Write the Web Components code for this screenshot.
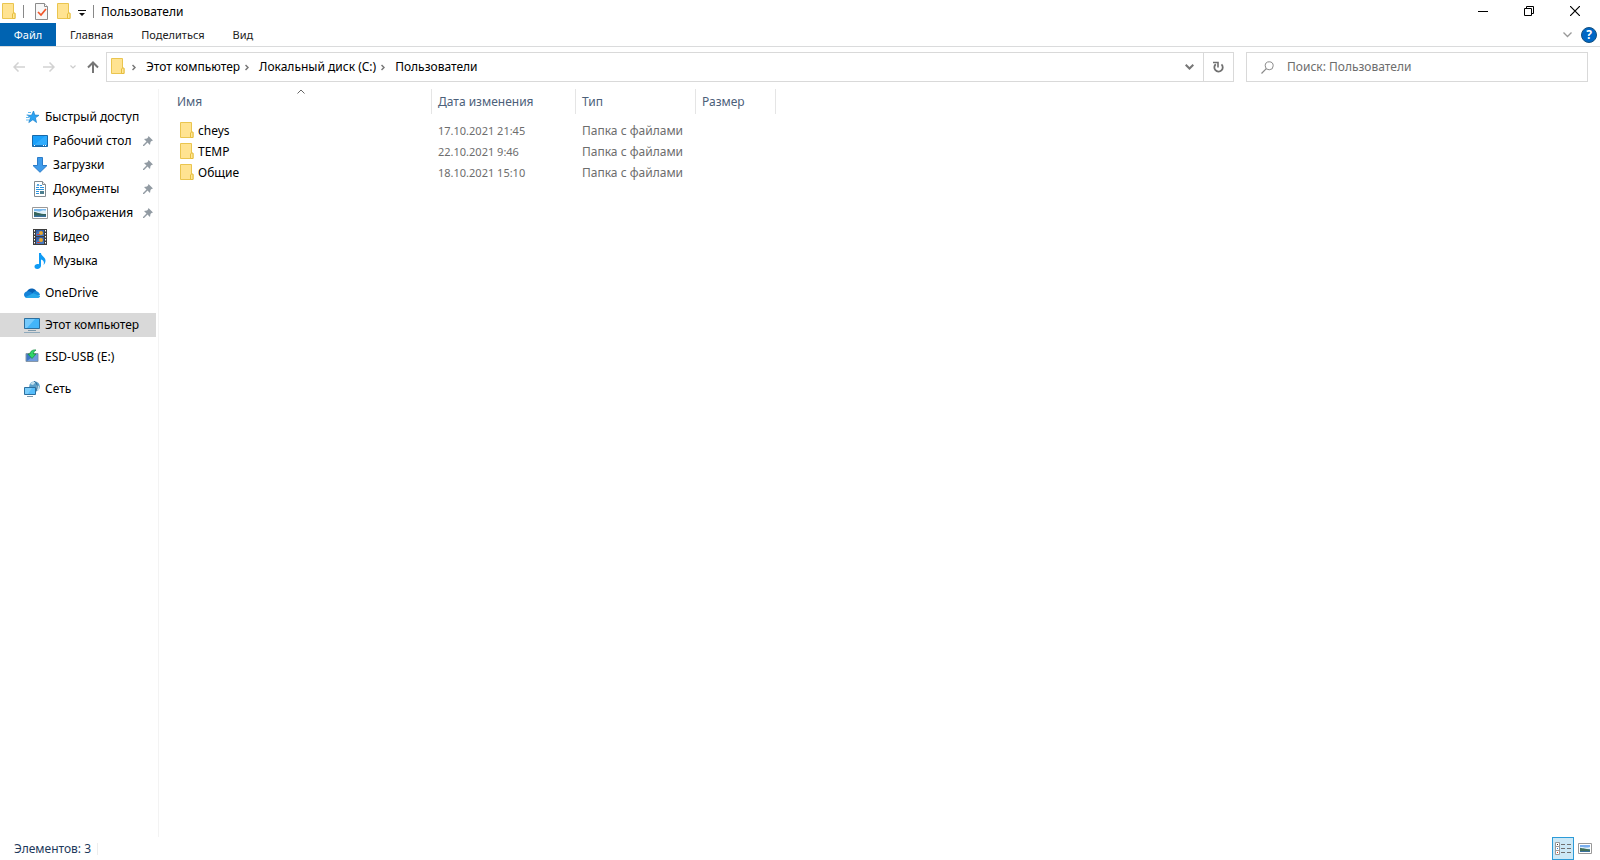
<!DOCTYPE html>
<html lang="ru">
<head>
<meta charset="utf-8">
<title>Пользователи</title>
<style>
  html, body { height: 100%; margin: 0; }
  body { background: #fff; color: #000; font: 12px/16px "Noto Sans", "Open Sans", sans-serif; }
</style>
</head>
<body>
<explorer-window></explorer-window>

<script>
const RESET = `
  * { box-sizing: border-box; }
  button { font: inherit; color: inherit; background: none; border: 0; padding: 0; margin: 0;
           display: inline-flex; align-items: center; justify-content: center; white-space: nowrap; }
  a { color: inherit; text-decoration: none; white-space: nowrap; }
`;

function define(name, html, setup) {
  const template = document.createElement('template');
  template.innerHTML = html;
  customElements.define(name, class extends HTMLElement {
    constructor() {
      super();
      this.attachShadow({ mode: 'open' }).append(template.content.cloneNode(true));
    }
    connectedCallback() { if (setup) setup(this, this.shadowRoot); }
  });
}

/* name: [width, height, drawing] */
const ICONS = {
  folder: [14, 18, `<path d="M.5.5h11v10h1.500v5H.5z" fill="#ffe391" stroke="#eac54f"/><path d="M10.500 15.500v-4.500l1-1h1.500v5.500z" fill="#ffe896" stroke="#e6bd3f"/>`],
  check: [13, 17, `<path d="M.5.5h9l3 3v13h-12z" fill="#f7f7f7" stroke="#8b8b8b"/><path d="M9.500.5v3h3" fill="#fff" stroke="#8b8b8b"/><path d="M3 9l3 3 5-6" fill="none" stroke="#f0562a" stroke-width="1.700"/>`],
  menu: [8, 6, `<path d="M0 0h8v1H0zM1 3h6L4 6z" fill="#111"/>`],
  min: [10, 10, `<path d="M0 5h10v1H0z"/>`],
  restore: [10, 10, `<path d="M.5 2.500h7v7h-7zM2.500 2.500v-2h7v7h-2" fill="none" stroke="#000"/>`],
  close: [10, 10, `<path d="M0 0l10 10M10 0L0 10" fill="none" stroke="#000" stroke-width="1.200"/>`],
  collapse: [9, 6, `<path d="M.5.5l4 4 4-4" fill="none" stroke="#999" stroke-width="1.300"/>`],
  back: [12, 10, `<path d="M12 5H1M5.500.5L1 5l4.500 4.500" fill="none" stroke="#d2d2d2" stroke-width="1.500"/>`],
  forward: [12, 10, `<path d="M0 5h11M6.500.5L11 5 6.500 9.500" fill="none" stroke="#d2d2d2" stroke-width="1.500"/>`],
  recent: [6, 4, `<path d="M.5.5L3 3 5.500.5" fill="none" stroke="#ccc" stroke-width="1.200"/>`],
  up: [12, 12, `<path d="M6 12V1M1 6.500L6 1.500l5 5" fill="none" stroke="#767676" stroke-width="2"/>`],
  crumb: [4, 7, `<path d="M.5 1l2.500 2.500L.5 6" fill="none" stroke="#777" stroke-width="1.500"/>`],
  down: [9, 6, `<path d="M.7.7l3.800 3.800L8.300.7" fill="none" stroke="#777" stroke-width="2"/>`],
  refresh: [11, 12, `<path d="M2.800 3.200A4.200 4.200 0 1 0 8.500 3.400" fill="none" stroke="#707070" stroke-width="1.800"/><path d="M0 1.500h5v5" fill="none" stroke="#707070" stroke-width="1.600"/>`],
  search: [13, 13, `<circle cx="8.200" cy="4.800" r="4" fill="none" stroke="#8a8a8a"/><path d="M5.300 7.700L.5 12.500" stroke="#8a8a8a" stroke-width="1.200"/>`],
  sort: [8, 5, `<path d="M.5 4.500L4 1l3.500 3.500" fill="none" stroke="#666"/>`],
  star: [16, 16, `<path d="M9.500 2l1.300 4.100 4.200.2-3.600 2.500 1.100 4.700-3.600-2.800-4.100 2.800 1.700-4.700L3.500 6.300h4.100z" fill="#2ba3f3" stroke="#2187cf" stroke-width=".8"/><path d="M4 3.500h3M2.500 6h2M2 8.500h3M2 11h3" stroke="#62b9ef"/>`],
  desktop: [16, 12, `<path d="M.5.5h15v11H.5z" fill="#1aa0fa" stroke="#1769aa"/><path d="M1 11L13 1h2v10z" fill="#40b4ff" opacity=".6"/><path d="M1 10h14v1H1z" fill="#1a75bd"/><path d="M2 10h1v1H2zM11 10h1v1h-1zM13 10h1v1h-1z" fill="#fff"/>`],
  download: [16, 16, `<path d="M5.500.5h5v8h4.500L8 15.300 1 8.500h4.500z" fill="#3f9bea" stroke="#2b7cc9"/>`],
  document: [12, 16, `<path d="M.5.5h8l3 3v12H.5z" fill="#fff" stroke="#828b90"/><path d="M8.500.5v3h3" fill="#eee" stroke="#828b90"/><path d="M2 6.500h3M6 4.500h2M6 6.500h4M2 8.500h8M2 10.500h3M2 12.500h3" stroke="#2c93dd"/><path d="M3 5l1-2 1 2" fill="none" stroke="#2c93dd"/><path d="M6 10h4v3H6z" fill="#4c7f8f"/>`],
  picture: [16, 12, `<path d="M.5.5h15v11H.5z" fill="#fff" stroke="#999"/><path d="M2 2h12v8H2z" fill="#7ab9ee"/><path d="M2 4.500c3-1.500 4 1 7-.5s3 0 5-.5V7H2z" fill="#e1f1fa"/><path d="M2 5c3 0 5 2 12 2v3H2z" fill="#36655b"/><path d="M2 8.500h12V10H2z" fill="#39709d"/>`],
  thumb: [14, 11, `<path d="M.5.5h13v10H.5z" fill="#fff" stroke="#999"/><path d="M2 2h10v7H2z" fill="#7aaeee"/><path d="M2 4.500c3-1.500 4 1 10-.5V6H2z" fill="#e1f1fa"/><path d="M2 5c3 0 5 1 10 1.500V9H2z" fill="#43705b"/><path d="M2 8h10v1H2z" fill="#39709d"/>`],
  video: [14, 16, `<path d="M0 0h14v16H0z" fill="#3d3d3d"/><path d="M3 1h8v6H3zM3 8h8v7H3z" fill="#315ea8"/><path d="M3 4l3-2 2 1 3 3v1H3zM3 12l4-3 4 4v2H3z" fill="#4677bd"/><circle cx="8" cy="4" r="2" fill="#e9a72c"/><circle cx="8" cy="11" r="2" fill="#e9a72c"/><path d="M4 5h3v1H4zM4 13h3v1H4z" fill="#d84234"/><path d="M1.500 1v15M12.500 1v15" stroke="#fff" stroke-dasharray="1.500 1.500"/>`],
  music: [12, 16, `<path d="M5 0h2c0 3 4.500 4 4.500 7.500 0 2-1 3.500-2 4.500 1-3 .2-4.500-2.500-5.500v6.200C7 14.500 5.300 16 3.300 16S.5 15 .5 13.600C.5 12 2 11 3.600 11c.5 0 1 .1 1.400.3z" fill="#0f9bf5"/>`],
  cloud: [16, 10, `<path d="M2.500 4.500C3.500 1.500 6 0 8.500.5c2.300.3 3.700 1.800 4.200 3.500L8 7z" fill="#0762b5"/><path d="M9 4.500c1-1 2.500-1.500 4-.9 1.700.6 3 2 3 3.600L9 8z" fill="#168cdb"/><path d="M3.200 3.300C5 3 6.500 3.700 8 4.700l8 3.600C15.600 9.400 14.600 10 13.300 10H3.500C1.500 10 0 8.500 0 6.700 0 5 1.400 3.500 3.200 3.300z" fill="#1583d8"/><path d="M1.200 9.200L9.300 5.200 16 8c-.4 1.300-1.400 2-2.700 2H3.500c-1 0-1.700-.3-2.300-.8z" fill="#28a8ea"/>`],
  computer: [16, 15, `<path d="M.5.5h15v10H.5z" fill="#42b5fa" stroke="#2d6f9e"/><path d="M1 1h10L3 10H1z" fill="#8bd3fc" opacity=".7"/><path d="M4 12.500h8" stroke="#7c98ab"/><path d="M0 14.500h16" stroke="#8fa9bb"/>`],
  usb: [16, 16, `<path d="M2 4.500h12v8H2z" fill="#3f78c6" stroke="#8798a9"/><path d="M3 12l9-7h1.500v7H3z" fill="#6e9bdb"/><path d="M12 1C9 .5 6 2 6 5H4l4 4.500L12 5H9.500C9.500 3 10.500 2 12 1z" fill="#2fd665" stroke="#158a40" stroke-width=".7"/>`],
  network: [16, 16, `<circle cx="10.500" cy="5.500" r="5.300" fill="#5a9fc9"/><path d="M6 3c2-2 4-3 6-2L9 4zM12 4l3 1v4l-2 1z" fill="#c2dfec"/><path d="M10 0c4 2 4 8 1 11" fill="none" stroke="#2b6793"/><path d="M.5 6.500h11v7H.5z" fill="#55bdfb" stroke="#2d6f9e"/><path d="M1 7h7l-4 6H1z" fill="#92d7fc" opacity=".6"/><path d="M3 15.500h6" stroke="#7c98ab"/>`],
  pin: [10, 10, `<path d="M5.500 0L10 4.500 8.500 5 7.500 6 7 9 4.500 6.500 1 10H0V9l3.500-3.500L1 3l3-.5 1-1z" fill="#929ba3"/>`],
  details: [16, 13, `<path d="M.5.500h4v4h-4zM.5 4.500h4v4h-4zM.5 8.500h4v4h-4z" fill="#fff" stroke="#999"/><path d="M2 2h1v1H2z" fill="#333"/><path d="M2 6h1v1H2z" fill="#2878d0"/><path d="M2 10h1v1H2z" fill="#e23b10"/><path d="M6 2.500h4M12 2.500h4M6 6.500h4M12 6.500h4M6 10.500h4M12 10.500h4" stroke="#707070"/>`],
};

define('ui-icon', `<style>:host{display:inline-flex;flex:none}svg{display:block}</style>`, (el, root) => {
  const [w, h, body] = ICONS[el.getAttribute('name')];
  root.innerHTML += `<svg width="${w}" height="${h}" viewBox="0 0 ${w} ${h}" aria-hidden="true">${body}</svg>`;
});

define('title-bar', `<style>${RESET}
  :host { display: flex; align-items: center; height: 23px; padding: 0 2px; }
  .sep { width: 1px; height: 13px; background: #888; }
  .quick { display: flex; align-items: center; flex: 1; }
  .sep.first { margin: 0 11px 0 7px; }
  .quick button + button { margin-left: 9px; }
  .quick button.more { margin: 2px 7px 0 7px; }
  h1 { font: inherit; margin: 0 0 0 7px; }
  .win { width: 46px; height: 21px; align-self: flex-start; }
</style>
<div class="quick">
  <ui-icon name="folder"></ui-icon><span class="sep first"></span>
  <button aria-label="Свойства"><ui-icon name="check"></ui-icon></button>
  <button aria-label="Новая папка"><ui-icon name="folder"></ui-icon></button>
  <button class="more" aria-label="Настройка панели"><ui-icon name="menu"></ui-icon></button>
  <span class="sep"></span><h1><slot></slot></h1>
</div>
<button class="win" aria-label="Свернуть"><ui-icon name="min"></ui-icon></button>
<button class="win" aria-label="Восстановить"><ui-icon name="restore"></ui-icon></button>
<button class="win" aria-label="Закрыть"><ui-icon name="close"></ui-icon></button>`);

define('ribbon-tabs', `<style>${RESET}
  :host { display: flex; align-items: center; height: 24px; border-bottom: 1px solid #dadbdc; padding-right: 3px; color: #222; font-size: 11px; }
  nav { display: flex; flex: 1; align-self: stretch; }
  nav button { padding: 0 14px; }
  nav .file { width: 56px; background: #0063b1; color: #fff; }
  .help { width: 16px; height: 16px; margin-left: 9px; border-radius: 50%; background: #0067c5; border: 1px solid #14507f; color: #fff; font-weight: 700; font-size: 12px; }
</style>
<nav>
  <button class="file">Файл</button><button>Главная</button><button>Поделиться</button><button>Вид</button>
</nav>
<button aria-label="Развернуть ленту"><ui-icon name="collapse"></ui-icon></button>
<button class="help" aria-label="Справка">?</button>`);

define('address-bar', `<style>${RESET}
  :host { display: flex; align-items: center; padding: 5px 12px 7px 13px; }
  .nav { display: flex; align-items: center; width: 93px; }
  .nav button:nth-child(2) { margin-left: 18px; }
  .nav button:nth-child(3) { margin-left: 15px; }
  .nav button:nth-child(4) { margin-left: 11px; }
  .path { display: flex; align-items: center; flex: 1; height: 30px; border: 1px solid #d9d9d9; padding-left: 4px; }
  .crumbs { display: flex; align-items: center; flex: 1; }
  .crumbs ui-icon + ui-icon { margin-left: 7px; }
  .crumbs a { margin: 0 5px 0 10px; }
  .path .drop { width: 28px; }
  .path .reload { width: 30px; height: 28px; border-left: 1px solid #d9d9d9; }
  label { display: flex; align-items: center; gap: 13px; width: 342px; height: 30px; margin-left: 12px; padding: 0 14px; border: 1px solid #d9d9d9; }
  input { flex: 1; min-width: 0; border: 0; padding: 0; outline: 0; font: inherit; background: none; }
  input::placeholder { color: #6d6d6d; opacity: 1; }
</style>
<div class="nav">
  <button aria-label="Назад"><ui-icon name="back"></ui-icon></button>
  <button aria-label="Вперед"><ui-icon name="forward"></ui-icon></button>
  <button aria-label="Последние расположения"><ui-icon name="recent"></ui-icon></button>
  <button aria-label="Вверх"><ui-icon name="up"></ui-icon></button>
</div>
<div class="path">
  <div class="crumbs">
    <ui-icon name="folder"></ui-icon>
    <ui-icon name="crumb"></ui-icon><a href="#computer">Этот компьютер</a>
    <ui-icon name="crumb"></ui-icon><a href="#c">Локальный диск (C:)</a>
    <ui-icon name="crumb"></ui-icon><a href="#users">Пользователи</a>
  </div>
  <button class="drop" aria-label="Предыдущие расположения"><ui-icon name="down"></ui-icon></button>
  <button class="reload" aria-label="Обновить"><ui-icon name="refresh"></ui-icon></button>
</div>
<label><ui-icon name="search"></ui-icon><input type="text" aria-label="Поиск" placeholder="Поиск: Пользователи"></label>`);

define('nav-item', `<style>${RESET}
  :host { display: block; }
  a { display: flex; align-items: center; height: 24px; padding: 0 3px 0 24px; }
  :host([nested]) a { padding-left: 32px; }
  :host([selected]) a { background: #d9d9d9; }
  .icon { display: flex; justify-content: center; width: 16px; margin-right: 5px; }
  .text { flex: 1; }
  .pin { display: none; }
  :host([pinned]) .pin { display: inline-flex; }
</style>
<a href="#"><span class="icon"></span><span class="text"><slot></slot></span><ui-icon class="pin" name="pin"></ui-icon></a>`,
(el, root) => { root.querySelector('.icon').innerHTML = `<ui-icon name="${el.getAttribute('icon')}"></ui-icon>`; });

define('nav-pane', `<style>${RESET}
  :host { display: flex; flex-direction: column; gap: 8px; width: 159px; padding: 16px 2px 0 0; border-right: 1px solid #f3f3f3; }
</style>
<div>
  <nav-item icon="star">Быстрый доступ</nav-item>
  <nav-item nested pinned icon="desktop">Рабочий стол</nav-item>
  <nav-item nested pinned icon="download">Загрузки</nav-item>
  <nav-item nested pinned icon="document">Документы</nav-item>
  <nav-item nested pinned icon="picture">Изображения</nav-item>
  <nav-item nested icon="video">Видео</nav-item>
  <nav-item nested icon="music">Музыка</nav-item>
</div>
<nav-item icon="cloud">OneDrive</nav-item>
<nav-item icon="computer" selected>Этот компьютер</nav-item>
<nav-item icon="usb">ESD-USB (E:)</nav-item>
<nav-item icon="network">Сеть</nav-item>`);

define('file-list', `<style>${RESET}
  :host { display: block; flex: 1; }
  table { table-layout: fixed; border-collapse: separate; border-spacing: 0; width: 617px; color: #6d6d6d; }
  th { padding: 0 0 6px; font-weight: 400; text-align: left; color: #4c607a; }
  th div { position: relative; height: 25px; padding: 5px 6px 0; border-right: 1px solid #e5e5e5; }
  th:first-child div { padding-left: 18px; }
  th ui-icon { position: absolute; top: 0; right: 126px; }
  td { height: 21px; padding: 0 6px; }
  td:first-child { padding-left: 21px; color: #000; }
  td.date { font-size: 11px; }
  .name { display: flex; align-items: center; gap: 4px; }
</style>
<table>
  <colgroup><col style="width:273px"><col style="width:144px"><col style="width:120px"><col style="width:80px"></colgroup>
  <thead><tr>
    <th><div>Имя<ui-icon name="sort"></ui-icon></div></th><th><div>Дата изменения</div></th><th><div>Тип</div></th><th><div>Размер</div></th>
  </tr></thead>
  <tbody></tbody>
</table>`, (el, root) => {
  const files = [['cheys', '17.10.2021 21:45'], ['TEMP', '22.10.2021 9:46'], ['Общие', '18.10.2021 15:10']];
  root.querySelector('tbody').innerHTML = files.map(([name, date]) =>
    `<tr><td><div class="name"><ui-icon name="folder"></ui-icon><span>${name}</span></div></td><td class="date">${date}</td><td>Папка с файлами</td><td></td></tr>`).join('');
});

define('status-bar', `<style>${RESET}
  :host { display: flex; align-items: center; height: 23px; padding: 0 4px 0 14px; color: #1e395b; }
  .count { flex: 1; }
  .count span { display: inline-block; padding-right: 6px; line-height: 12px; border-right: 1px solid #eee; }
  button { width: 22px; height: 23px; }
  .on { background: #cce8f6; border: 1px solid #2c9bd8; }
</style>
<div class="count"><span><slot></slot></span></div>
<button class="on" aria-label="Таблица"><ui-icon name="details"></ui-icon></button>
<button aria-label="Крупные значки"><ui-icon name="thumb"></ui-icon></button>`);

define('explorer-window', `<style>${RESET}
  :host { display: flex; flex-direction: column; min-height: 100vh; }
  main { display: flex; flex: 1; }
</style>
<title-bar>Пользователи</title-bar>
<ribbon-tabs></ribbon-tabs>
<address-bar></address-bar>
<main><nav-pane></nav-pane><file-list></file-list></main>
<status-bar>Элементов: 3</status-bar>`);
</script>
</body>
</html>
